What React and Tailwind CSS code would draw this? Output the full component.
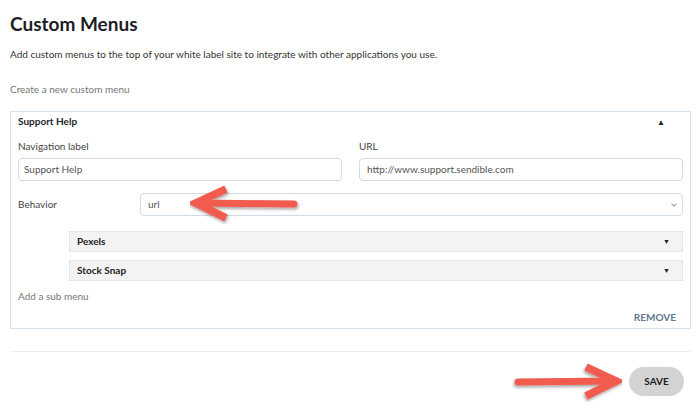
import React from 'react';

function Arrow({ className, flip }) {
  return (
    <svg className={className} viewBox="0 0 110 40" width="110" height="40">
      <defs>
        <filter id={flip ? 'shR' : 'shL'} x="-20%" y="-40%" width="140%" height="180%">
          <feDropShadow dx="1" dy="2" stdDeviation="1.5" floodColor="#000" floodOpacity="0.35" />
        </filter>
      </defs>
      <g filter={`url(#${flip ? 'shR' : 'shL'})`} transform={flip ? 'translate(110 0) scale(-1 1)' : undefined}>
        <path d="M6 19 L104 20" stroke="#f25c50" strokeWidth="7" strokeLinecap="round" fill="none" />
        <path d="M36 5 L6 19 L36 34" stroke="#f25c50" strokeWidth="8" strokeLinejoin="miter" fill="none" />
      </g>
    </svg>
  );
}

export default function App() {
  return (
    <div
      className="relative w-[700px] h-[417px] overflow-hidden bg-white pl-[10px] pr-[9px] text-[#333]"
      style={{ fontFamily: 'Lato, "Open Sans", sans-serif' }}
    >
      <h1 className="pt-[12px] text-[19px] font-bold leading-[24px] text-[#1d1d26]">Custom Menus</h1>
      <p className="mt-[11px] text-[10px] leading-[14px] text-[#333]">
        Add custom menus to the top of your white label site to integrate with other applications you use.
      </p>
      <p className="mt-[21px] text-[10px] leading-[14px] text-[#777]">Create a new custom menu</p>

      <div className="mt-[15px] w-[681px] h-[218px] border border-[#d6e2ee] px-[7px]">
        <div className="flex h-[19px] items-center justify-between pr-[18px]">
          <span className="text-[10px] font-bold text-[#1d1d26]">Support Help</span>
          <span className="text-[8px] text-[#222]">▲</span>
        </div>

        <div className="mt-[8px] grid grid-cols-2 gap-x-[17px]">
          <div>
            <label className="block text-[10px] leading-[14px] text-[#444]">Navigation label</label>
            <div className="mt-[5px] flex h-[23px] items-center rounded-[4px] border border-[#cfdbe7] px-[5px] text-[10px] text-[#555]">
              Support Help
            </div>
          </div>
          <div>
            <label className="block text-[10px] leading-[14px] text-[#444]">URL</label>
            <div className="mt-[5px] flex h-[23px] items-center rounded-[4px] border border-[#cfdbe7] px-[7px] text-[10px] text-[#555]">
              http://www.support.sendible.com
            </div>
          </div>
        </div>

        <div className="mt-[12px] flex items-center">
          <span className="w-[122px] text-[10px] text-[#444]">Behavior</span>
          <div className="flex h-[23px] flex-1 items-center justify-between rounded-[4px] border border-[#cfdbe7] pl-[7px] pr-[4px] text-[10px] text-[#555]">
            <span>url</span>
            <svg width="8" height="8" viewBox="0 0 8 8">
              <path d="M1.5 2.8 L4 5.2 L6.5 2.8" stroke="#777" strokeWidth="1" fill="none" />
            </svg>
          </div>
        </div>

        <div className="ml-[51px] mt-[15px] flex flex-col gap-[8px]">
          {['Pexels', 'Stock Snap'].map((t) => (
            <div
              key={t}
              className="flex h-[21px] items-center justify-between border border-[#dfe6ee] bg-[#f3f3f3] pl-[7px] pr-[12px]"
            >
              <span className="text-[10px] font-bold text-[#222]">{t}</span>
              <span className="text-[7px] text-[#222]">▼</span>
            </div>
          ))}
        </div>

        <p className="mt-[9px] text-[10px] leading-[12px] text-[#777]">Add a sub menu</p>
        <div className="mt-[8px] flex justify-end pr-[7px]">
          <span className="text-[10px] font-bold text-[#5f7a92]">REMOVE</span>
        </div>
      </div>

      <div className="mt-[22px] h-px w-[681px] bg-[#eceff2]" />

      <div className="mt-[15px] flex justify-end pr-[7px]">
        <button className="h-[29px] w-[55px] rounded-full bg-[#d3d3d3] text-[10px] font-bold text-[#1d1d26]">
          SAVE
        </button>
      </div>

      <Arrow className="absolute left-[190px] top-[184px]" />
      <Arrow className="absolute left-[512px] top-[362px]" flip />
    </div>
  );
}
